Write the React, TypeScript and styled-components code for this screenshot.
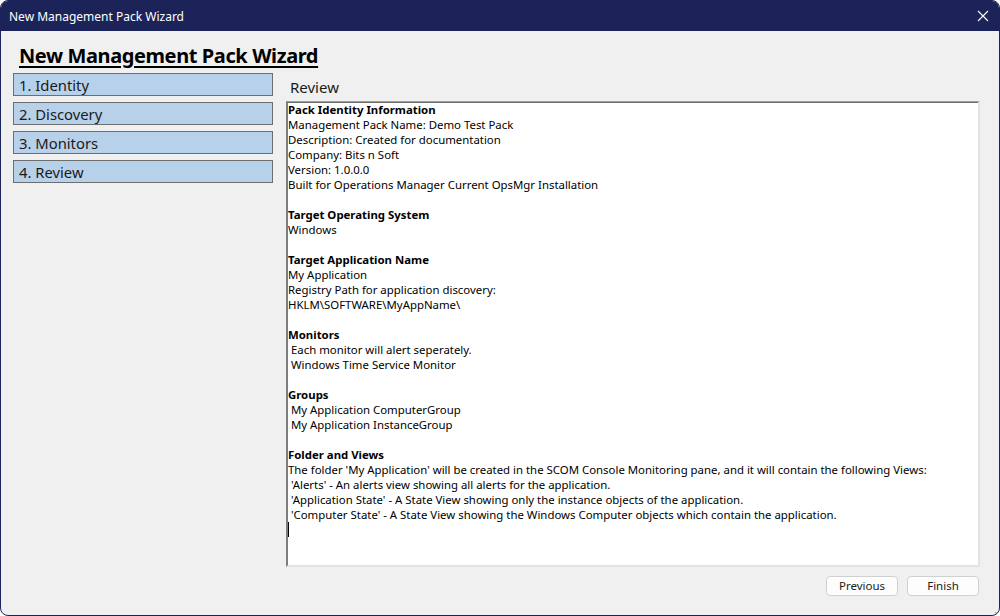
import React from "react";
import styled, { createGlobalStyle } from "styled-components";

const Global = createGlobalStyle`
  html, body { margin: 0; padding: 0; background: #ffffff; }
  body { font-family: "Noto Sans", "Segoe UI", sans-serif; }
  #root { height: 616px; }
  * { box-sizing: border-box; }
`;

const Window = styled.div`
  position: relative;
  width: 1000px;
  height: 616px;
  display: flex;
  flex-direction: column;
  border: 1px solid #1c2359;
  border-radius: 8px;
  overflow: hidden;
  background: #f0f0f0;
`;

const TitleBar = styled.div`
  height: 30px;
  flex: 0 0 30px;
  background: #1c2359;
  display: flex;
  align-items: center;
  justify-content: space-between;
  padding: 0 10px 0 8px;
  color: #ffffff;
  font-size: 12px;
`;

const CloseButton = styled.div`
  width: 12px;
  height: 12px;
  display: flex;
  align-items: center;
  justify-content: center;
  margin-top: -1px;
`;

const Body = styled.div`
  flex: 1;
  display: flex;
  flex-direction: column;
  padding: 12px 19px 19px 12px;
`;

const Heading = styled.h1`
  margin: 0 0 4px 6px;
  height: 26px;
  line-height: 26px;
  font-size: 20px;
  font-weight: 700;
  color: #000000;
  text-decoration: underline;
  text-underline-offset: 3px;
  text-decoration-thickness: 2px;
  letter-spacing: -0.4px;
`;

const Content = styled.div`
  flex: 1;
  display: flex;
  gap: 13px;
  min-height: 0;
`;

const Nav = styled.div`
  width: 260px;
  display: flex;
  flex-direction: column;
  gap: 6px;
`;

const NavItem = styled.div`
  height: 23px;
  background: #b8d1ea;
  border: 1px solid #6e6e6e;
  padding: 0 5px;
  font-size: 14.8px;
  line-height: 22px;
  color: #1a1a1a;
`;

const Main = styled.div`
  flex: 1;
  display: flex;
  flex-direction: column;
  min-width: 0;
`;

const SectionLabel = styled.div`
  height: 28px;
  padding-left: 4px;
  font-size: 15px;
  line-height: 28px;
  color: #1a1a1a;
`;

const ReviewBox = styled.div`
  flex: 0 0 466px;
  background: #ffffff;
  border-top: 1px solid #a0a0a0;
  border-left: 2px solid #7d7d7d;
  border-right: 2px solid #e3e3e3;
  border-bottom: 2px solid #e3e3e3;
  box-shadow: inset 0 1px 0 #6d6d6d;
  font-size: 11.4px;
  line-height: 15px;
  color: #000000;
  overflow: hidden;
`;

const Line = styled.div<{ $bold?: boolean }>`
  height: 15px;
  white-space: pre;
  font-weight: ${(p) => (p.$bold ? 700 : 400)};
`;

const Caret = styled.div`
  width: 1px;
  height: 15px;
  background: #000000;
`;

const Footer = styled.div`
  display: flex;
  justify-content: flex-end;
  gap: 9px;
  margin-top: 9px;
  padding-right: 1px;
`;

const Button = styled.button`
  width: 72px;
  height: 20px;
  border: 1px solid #d0d0d0;
  border-radius: 4px;
  background: #fdfdfd;
  font-family: "Noto Sans", "Segoe UI", sans-serif;
  font-size: 11.5px;
  color: #1a1a1a;
  padding: 0;
  line-height: 18px;
`;

const Grip = styled.div`
  position: absolute;
  right: 2px;
  bottom: 2px;
  width: 10px;
  height: 10px;
`;

const lines: Array<[string, boolean?]> = [
  ["Pack Identity Information", true],
  ["Management Pack Name: Demo Test Pack"],
  ["Description: Created for documentation"],
  ["Company: Bits n Soft"],
  ["Version: 1.0.0.0"],
  ["Built for Operations Manager Current OpsMgr Installation"],
  [""],
  ["Target Operating System", true],
  ["Windows"],
  [""],
  ["Target Application Name", true],
  ["My Application"],
  ["Registry Path for application discovery:"],
  ["HKLM\\SOFTWARE\\MyAppName\\"],
  [""],
  ["Monitors", true],
  [" Each monitor will alert seperately."],
  [" Windows Time Service Monitor"],
  [""],
  ["Groups", true],
  [" My Application ComputerGroup"],
  [" My Application InstanceGroup"],
  [""],
  ["Folder and Views", true],
  [
    "The folder 'My Application' will be created in the SCOM Console Monitoring pane, and it will contain the following Views:",
  ],
  [" 'Alerts' - An alerts view showing all alerts for the application."],
  [" 'Application State' - A State View showing only the instance objects of the application."],
  [" 'Computer State' - A State View showing the Windows Computer objects which contain the application."],
];

const steps = ["1. Identity", "2. Discovery", "3. Monitors", "4. Review"];

export default function App() {
  return (
    <>
      <Global />
      <Window>
        <TitleBar>
          <span>New Management Pack Wizard</span>
          <CloseButton>
            <svg width="12" height="12" viewBox="0 0 12 12">
              <path d="M1 1 L11 11 M11 1 L1 11" stroke="#ffffff" strokeWidth="1.1" />
            </svg>
          </CloseButton>
        </TitleBar>
        <Body>
          <Heading>New Management Pack Wizard</Heading>
          <Content>
            <Nav>
              {steps.map((s) => (
                <NavItem key={s}>{s}</NavItem>
              ))}
            </Nav>
            <Main>
              <SectionLabel>Review</SectionLabel>
              <ReviewBox>
                {lines.map(([t, b], i) => (
                  <Line key={i} $bold={b}>
                    {t}
                  </Line>
                ))}
                <Caret />
              </ReviewBox>
              <Footer>
                <Button>Previous</Button>
                <Button>Finish</Button>
              </Footer>
            </Main>
          </Content>
        </Body>
        <Grip>
          <svg width="10" height="10" viewBox="0 0 10 10">
            {[
              [8, 2],
              [5, 5],
              [8, 5],
              [2, 8],
              [5, 8],
              [8, 8],
            ].map(([x, y], i) => (
              <rect key={i} x={x} y={y} width="1.5" height="1.5" fill="#a0a0a0" />
            ))}
          </svg>
        </Grip>
      </Window>
    </>
  );
}
